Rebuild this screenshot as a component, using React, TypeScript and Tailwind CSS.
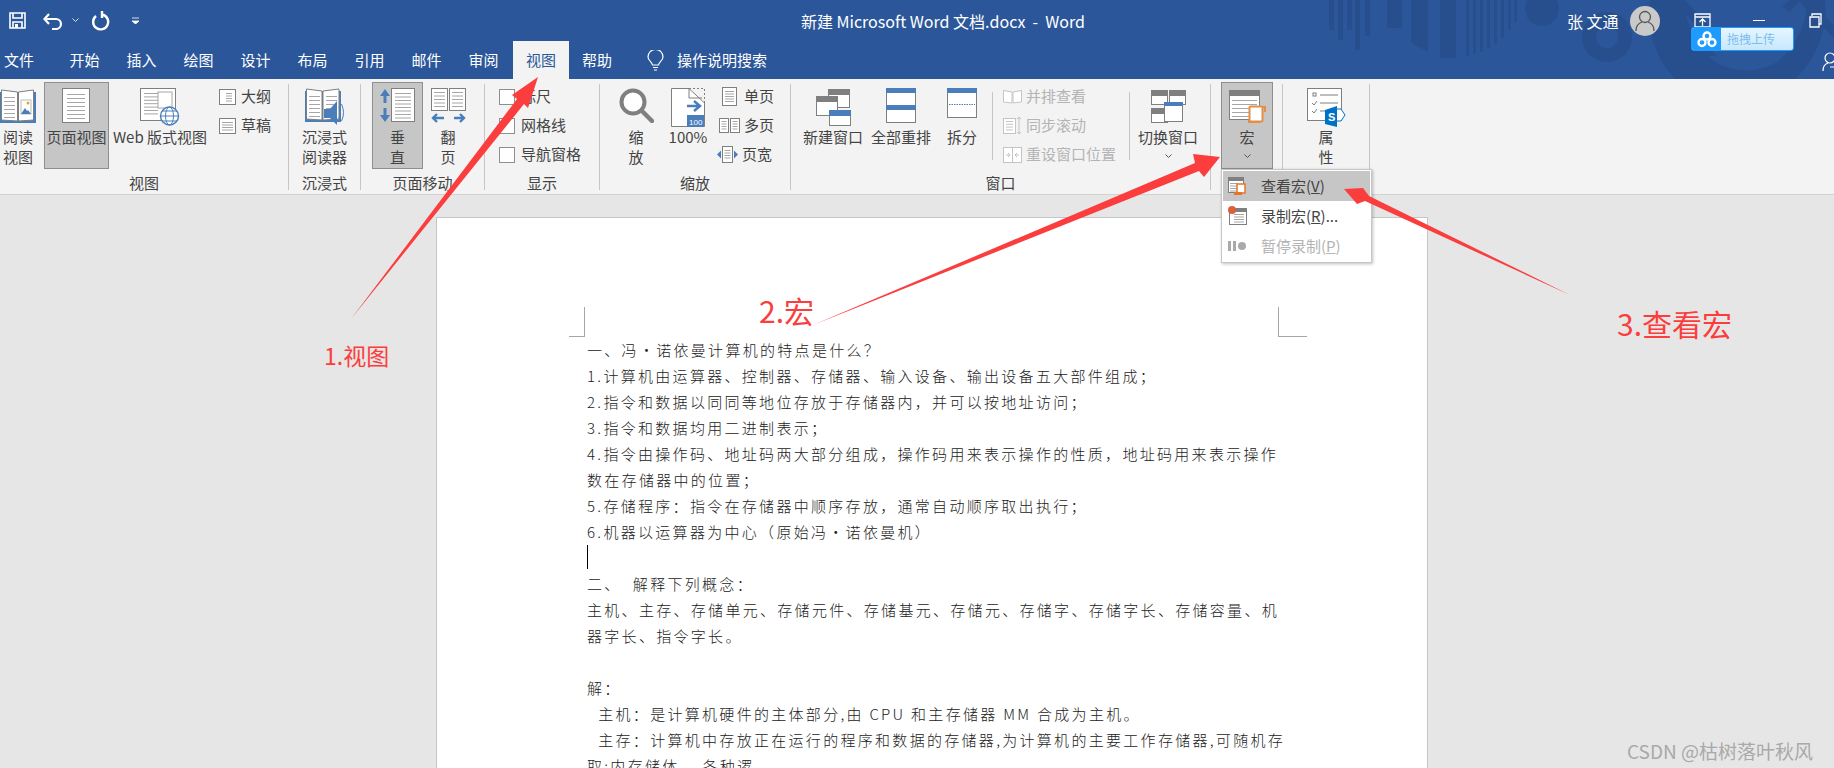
import React from 'react';

const gray = '#7f7f7f';
const blue = '#4a7ebb';
const dim = '#c4c4c4';

const Lines = ({ x, y, w, n, gap, color = '#a6a6a6' }: { x: number; y: number; w: number; n: number; gap: number; color?: string }) => (
  <>
    {Array.from({ length: n }).map((_, i) => (
      <line key={i} x1={x} x2={x + w} y1={y + i * gap + 0.5} y2={y + i * gap + 0.5} stroke={color} />
    ))}
  </>
);

const ReadIcon = () => (
  <svg width="36" height="37" viewBox="0 0 36 37">
    <path d="M0 4v31h36V4z" fill={blue} />
    <path d="M1.5 2 17.5 4v29L1.5 32z" fill="#fff" stroke={gray} />
    <path d="M18.5 4 33.5 2v30l-15 1z" fill="#fff" stroke={gray} />
    <Lines x={4} y={9} w={11} n={6} gap={4} />
    <rect x="21" y="12" width="10" height="14" fill="#fff" stroke="#bbb" />
    <path d="M21 26l4-6 2 3 1-1 3 4z" fill={blue} />
    <circle cx="28" cy="15" r="1.5" fill="#e8a33d" />
  </svg>
);

const PageIcon = () => (
  <svg width="29" height="36" viewBox="0 0 29 36">
    <rect x="0.5" y="0.5" width="27" height="34" fill="#fff" stroke={gray} />
    <Lines x={5} y={6} w={18} n={7} gap={4} />
  </svg>
);

const WebIcon = () => (
  <svg width="40" height="38" viewBox="0 0 40 38">
    <rect x="0.5" y="0.5" width="35" height="32" fill="#fff" stroke={gray} />
    <Lines x={4} y={5} w={14} n={7} gap={3.4} />
    <rect x="18" y="4" width="14" height="16" fill="#fff" stroke="#a6a6a6" />
    <circle cx="29.5" cy="28" r="9" fill="#fff" stroke={blue} strokeWidth="1.4" />
    <ellipse cx="29.5" cy="28" rx="4" ry="9" fill="none" stroke={blue} />
    <path d="M20.5 28h18M22 23h15M22 33h15" stroke={blue} fill="none" />
  </svg>
);

const SmallPage = ({ dots }: { dots?: boolean }) => (
  <svg width="17" height="16" viewBox="0 0 17 16">
    <rect x="0.5" y="0.5" width="16" height="15" fill="#fff" stroke={gray} />
    <Lines x={dots ? 7 : 3} y={4} w={dots ? 6 : 11} n={4} gap={2.5} />
  </svg>
);

const ImmersiveIcon = () => (
  <svg width="40" height="38" viewBox="0 0 40 38">
    <path d="M0 3v31h36V3z" fill={blue} />
    <path d="M1.5 1 17 3v29L1.5 31z" fill="#fff" stroke={gray} />
    <path d="M18 3 34 1v30l-16 1z" fill="#fff" stroke={gray} />
    <Lines x={4} y={8} w={11} n={6} gap={4} />
    <Lines x={21} y={8} w={11} n={4} gap={4} />
    <path d="M19 21h6l7-8v24l-7-7h-6z" fill={blue} />
    <path d="M34 19q3 6 0 11M36.500 16q4 9 0 17" stroke={blue} fill="none" />
  </svg>
);

const VerticalIcon = () => (
  <svg width="36" height="35" viewBox="0 0 36 35">
    <path d="M5 1 10 8H6.500v7h-3V8H0zM5 34 0 27h3.500v-7h3v7H10z" fill={blue} />
    <rect x="11.500" y="0.500" width="23" height="33" fill="#fff" stroke={gray} />
    <Lines x={15} y={5} w={16} n={8} gap={3.500} />
  </svg>
);

const FlipIcon = () => (
  <svg width="35" height="36" viewBox="0 0 35 36">
    <rect x="0.500" y="0.500" width="16" height="22" fill="#fff" stroke={gray} />
    <rect x="18.500" y="0.500" width="16" height="22" fill="#fff" stroke={gray} />
    <Lines x={3} y={4} w={11} n={5} gap={3.500} />
    <Lines x={21} y={4} w={11} n={5} gap={3.500} />
    <path d="M2 30h11M23 30h10M6 26l-4 4 4 4M29 26l4 4-4 4" stroke={blue} strokeWidth="2.400" fill="none" />
  </svg>
);

const Magnifier = () => (
  <svg width="35" height="35" viewBox="0 0 35 35">
    <circle cx="14" cy="14" r="11.500" fill="#fff" stroke={gray} strokeWidth="4" />
    <path d="M22.500 22.500 33 33" stroke={gray} strokeWidth="4.500" strokeLinecap="round" />
  </svg>
);

const ZoomPage = () => (
  <svg width="34" height="40" viewBox="0 0 34 40">
    <path d="M0.500 0.500H18L33.500 15V38.500H0.500z" fill="#fff" stroke={gray} />
    <path d="M18 0.500h15.500V15" fill="none" stroke={gray} strokeDasharray="2 2" />
    <path d="M18 0.500V10h13" fill="none" stroke={gray} />
    <path d="M16 18h12M23 13l6 5-6 5" stroke={blue} strokeWidth="2.500" fill="none" />
    <rect x="16" y="27" width="17" height="12" fill={blue} />
    <text x="18" y="36.500" fontSize="8" fill="#fff" fontFamily="Liberation Sans">100</text>
  </svg>
);

const SinglePage = () => (
  <svg width="15" height="19" viewBox="0 0 15 19">
    <rect x="0.500" y="0.500" width="14" height="18" fill="#fff" stroke={gray} />
    <Lines x={3} y={4} w={9} n={5} gap={2.500} />
  </svg>
);

const MultiPage = () => (
  <svg width="21" height="15" viewBox="0 0 21 15">
    <rect x="0.500" y="0.500" width="9" height="14" fill="#fff" stroke={gray} />
    <rect x="11.500" y="0.500" width="9" height="14" fill="#fff" stroke={gray} />
    <Lines x={2.500} y={3} w={5} n={4} gap={2.500} />
    <Lines x={13.500} y={3} w={5} n={4} gap={2.500} />
  </svg>
);

const PageWidth = () => (
  <svg width="21" height="17" viewBox="0 0 21 17">
    <rect x="5.500" y="0.500" width="10" height="16" fill="#fff" stroke={gray} />
    <Lines x={7.500} y={4} w={6} n={4} gap={2.500} />
    <path d="M4 4.500 0 8.500l4 4zM17 4.500l4 4-4 4z" fill={blue} />
  </svg>
);

const TitledWindow = ({ x, y, w, h, color = gray, bar = 6 }: { x: number; y: number; w: number; h: number; color?: string; bar?: number }) => (
  <>
    <rect x={x + 0.500} y={y + 0.500} width={w} height={h} fill="#fff" stroke={gray} />
    <rect x={x} y={y} width={w + 1} height={bar} fill={color} />
  </>
);

const NewWindow = () => (
  <svg width="35" height="38" viewBox="0 0 35 38">
    <TitledWindow x={12} y={1} w={21} h={18} />
    <TitledWindow x={0} y={8} w={21} h={19} />
    <TitledWindow x={13} y={22} w={21} h={15} color={blue} />
  </svg>
);

const ArrangeAll = () => (
  <svg width="31" height="36" viewBox="0 0 31 36">
    <rect x="0.500" y="0.500" width="29" height="34" fill="#fff" stroke={gray} />
    <rect x="0" y="0" width="30" height="5" fill={blue} />
    <rect x="0" y="17" width="30" height="5" fill={blue} />
  </svg>
);

const SplitIcon = () => (
  <svg width="30" height="31" viewBox="0 0 30 31">
    <rect x="0.500" y="0.500" width="29" height="29" fill="#fff" stroke={gray} />
    <rect x="0" y="0" width="30" height="5" fill={blue} />
    <line x1="2" x2="28" y1="16.500" y2="16.500" stroke={blue} strokeDasharray="1.500 1" />
  </svg>
);

const SideBySide = () => (
  <svg width="19" height="15" viewBox="0 0 19 15">
    <path d="M0.500 1.500 9 3v11L0.500 13zM18.500 1.500 10 3v11l8.500-1z" fill="#fff" stroke={dim} />
  </svg>
);

const SyncScroll = () => (
  <svg width="19" height="19" viewBox="0 0 19 19">
    <rect x="0.500" y="2.500" width="12" height="15" fill="#fff" stroke={dim} />
    <Lines x={3} y={5} w={7} n={4} gap={2.800} color={dim} />
    <path d="M16 1v17M14 3l2-2 2 2M14 16l2 2 2-2" fill="none" stroke={dim} />
  </svg>
);

const ResetPos = () => (
  <svg width="19" height="16" viewBox="0 0 19 16">
    <rect x="0.500" y="0.500" width="18" height="15" fill="#fff" stroke={dim} />
    <path d="M9.500 1v14M3 8h4M5 6l2 2-2 2M16 8h-4M14 6l-2 2 2 2" fill="none" stroke={dim} />
  </svg>
);

const SwitchWindow = () => (
  <svg width="35" height="33" viewBox="0 0 35 33">
    <TitledWindow x={0} y={0} w={16} h={14} />
    <TitledWindow x={18} y={0} w={16} h={14} />
    <TitledWindow x={0} y={18} w={16} h={14} />
    <TitledWindow x={13} y={12} w={18} h={19} color={blue} bar={4} />
  </svg>
);

const MacroIcon = () => (
  <svg width="37" height="34" viewBox="0 0 37 34">
    <rect x="0.500" y="0.500" width="30" height="29" fill="#fff" stroke={gray} />
    <rect x="0" y="0" width="31" height="6" fill={gray} />
    <Lines x={3} y={10} w={25} n={5} gap={4} />
    <path d="M19 33h12V30H19z" fill="#e58e47" />
    <rect x="20.500" y="16.500" width="13" height="15" rx="1" fill="#fff" stroke="#e58e47" strokeWidth="2" />
    <path d="M33 17h3v5" stroke="#e58e47" strokeWidth="2" fill="none" />
  </svg>
);

const PropsIcon = () => (
  <svg width="39" height="39" viewBox="0 0 39 39">
    <rect x="0.500" y="0.500" width="34" height="32" fill="#fff" stroke={gray} />
    <rect x="6" y="5" width="3" height="3" fill="#fff" stroke={gray} />
    <path d="M13 7h18M13 15h18M13 23h7M5 15l2 2 3-4M5 23l2 2 3-4" fill="none" stroke={gray} />
    <path d="M18 22l12-4v21l-12-3z" fill="#0072c6" />
    <path d="M30 21h4l4 6-4 6h-4" fill="#fff" stroke="#0072c6" />
    <text x="21" y="33" fontSize="11" fontWeight="700" fill="#fff" fontFamily="Liberation Sans">S</text>
  </svg>
);

const SmallMacro = () => (
  <svg width="19" height="18" viewBox="0 0 19 18">
    <rect x="0.500" y="0.500" width="15" height="15" fill="#fff" stroke={gray} />
    <rect x="0" y="0" width="16" height="4" fill={gray} />
    <Lines x={2} y={6} w={8} n={4} gap={2.500} />
    <rect x="9" y="7" width="8" height="9" fill="#fff" stroke="#e2762b" strokeWidth="1.500" />
    <rect x="6" y="15" width="8" height="3" fill="#e2762b" />
  </svg>
);

const RecordIcon = () => (
  <svg width="20" height="20" viewBox="0 0 20 20">
    <rect x="1.500" y="2.500" width="17" height="16" fill="#fff" stroke={gray} />
    <rect x="1" y="2" width="18" height="4" fill={gray} />
    <Lines x={6} y={8} w={10} n={4} gap={2.500} />
    <circle cx="4" cy="4" r="4" fill="#d9603b" />
  </svg>
);

const PauseIcon = () => (
  <svg width="19" height="12" viewBox="0 0 19 12">
    <rect x="0" y="1" width="3" height="10" fill="#aaa" />
    <rect x="5" y="1" width="3" height="10" fill="#aaa" />
    <circle cx="14" cy="6" r="4" fill="#aaa" />
  </svg>
);

const Chevron = ({ color = '#555' }: { color?: string }) => (
  <svg width="7" height="5" viewBox="0 0 7 5">
    <path d="M0.500 0.500 3.500 3.500 6.500 0.500" fill="none" stroke={color} />
  </svg>
);

const TitleDecor = () => (
  <svg className="absolute left-0 top-0" width="1834" height="79" viewBox="0 0 1834 79">
    <g fill="#274f8d">
      <rect x="1329" y="0" width="5" height="30" />
      <rect x="1338" y="0" width="5" height="40" />
      <rect x="1347" y="0" width="5" height="30" />
      <rect x="1355" y="0" width="5" height="50" />
      <rect x="1365" y="0" width="5" height="36" />
      <path d="M1387 0h15v28l-15-0zM1411 0h17v52l-17-9z" />
      <rect x="1440" y="0" width="16" height="58" />
      <rect x="1466" y="0" width="3" height="56" />
      <rect x="1473" y="0" width="3" height="54" />
      <rect x="1480" y="0" width="3" height="52" />
      <rect x="1487" y="0" width="3" height="48" />
      <rect x="1494" y="0" width="3" height="44" />
      <rect x="1501" y="0" width="3" height="38" />
      <rect x="1508" y="0" width="3" height="30" />
      <rect x="1514" y="0" width="3" height="22" />
      <circle cx="1542" cy="9" r="17" />
      <circle cx="1607" cy="37" r="18" fill="none" stroke="#274f8d" strokeWidth="14" />
      <path d="M1650 0a95 95 0 0 0 25 79h120a95 95 0 0 0 30-79h-18a78 78 0 0 1-30 62q-30 17-62 0a78 78 0 0 1-30-62z" />
      <path d="M1665 0l52 56h-12l-52-56zM1685 0l40 44h-12l-40-44zM1810 0l24 26v12l-36-38zM1790 0h10l-10 12-8-6z" />
    </g>
  </svg>
);

const Group = ({ w, label, children }: { w: string; label: string; children: React.ReactNode }) => (
  <div className={`${w} h-[106px] shrink-0 border-r border-[#c6c6c6] flex flex-col`}>
    <div className="h-[87px] -mt-[2px] flex">{children}</div>
    <div className="h-[20px] mt-[4px] leading-[20px] text-center text-[15px] text-[#444]">{label}</div>
  </div>
);

const Big = ({ w, ml = '', sel, icon, lines }: { w: string; ml?: string; sel?: boolean; icon: React.ReactNode; lines: string[] }) => (
  <div className={`${w} ${ml} h-[87px] shrink-0 flex flex-col items-center border ${sel ? 'bg-[#c6c6c6] border-[#8f8f8f]' : 'border-transparent'}`}>
    <div className="h-[44px] pt-[5px] flex items-start justify-center">{icon}</div>
    {lines.map((l, i) => (
      <div key={i} className="h-[20px] leading-[20px] whitespace-nowrap text-[15px] text-[#444]">{l}</div>
    ))}
  </div>
);

const BigChevron = ({ w, sel, ml = '', icon, label }: { w: string; sel?: boolean; ml?: string; icon: React.ReactNode; label: string }) => (
  <div className={`${w} ${ml} h-[87px] shrink-0 flex flex-col items-center border ${sel ? 'bg-[#c6c6c6] border-[#8f8f8f]' : 'border-transparent'}`}>
    <div className="h-[44px] pt-[7px] flex items-start justify-center">{icon}</div>
    <div className="h-[20px] leading-[20px] whitespace-nowrap text-[15px] text-[#444]">{label}</div>
    <div className="mt-[7px] flex"><Chevron /></div>
  </div>
);

const SmallRow = ({ icon, label, dis, iconW = 'w-[20px]' }: { icon: React.ReactNode; label: string; dis?: boolean; iconW?: string }) => (
  <div className="h-[29px] flex items-center">
    <div className={`${iconW} flex justify-center`}>{icon}</div>
    <span className={`ml-[4px] text-[15px] whitespace-nowrap ${dis ? 'text-[#b4b4b4]' : 'text-[#444]'}`}>{label}</span>
  </div>
);

const Check = ({ label }: { label: string }) => (
  <div className="h-[29px] flex items-center">
    <div className="w-[16px] h-[16px] bg-white border border-[#8f8f8f]" />
    <span className="ml-[6px] text-[15px] whitespace-nowrap text-[#444]">{label}</span>
  </div>
);

const MenuItem = ({ icon, label, active, dis }: { icon: React.ReactNode; label: React.ReactNode; active?: boolean; dis?: boolean }) => (
  <div className={`h-[30px] flex items-center ${active ? 'bg-[#c6c6c6]' : ''}`}>
    <div className="w-[38px] pl-[5px] flex">{icon}</div>
    <span className={`text-[15px] whitespace-nowrap ${dis ? 'text-[#b4b4b4]' : 'text-[#444]'}`}>{label}</span>
  </div>
);

const docLines = [
  '一、冯•诺依曼计算机的特点是什么？',
  '1.计算机由运算器、控制器、存储器、输入设备、输出设备五大部件组成；',
  '2.指令和数据以同同等地位存放于存储器内，并可以按地址访问；',
  '3.指令和数据均用二进制表示；',
  '4.指令由操作码、地址码两大部分组成，操作码用来表示操作的性质，地址码用来表示操作',
  '数在存储器中的位置；',
  '5.存储程序：指令在存储器中顺序存放，通常自动顺序取出执行；',
  '6.机器以运算器为中心（原始冯•诺依曼机）',
  '',
  '二、  解释下列概念：',
  '主机、主存、存储单元、存储元件、存储基元、存储元、存储字、存储字长、存储容量、机',
  '器字长、指令字长。',
  '',
  '解：',
  '  主机：是计算机硬件的主体部分,由 CPU 和主存储器 MM 合成为主机。',
  '  主存：计算机中存放正在运行的程序和数据的存储器,为计算机的主要工作存储器,可随机存',
  '取;内存储体、 各种逻',
];

export default function App() {
  return (
    <div className="relative w-[1834px] h-[768px] overflow-hidden bg-[#e6e6e6] font-['Noto_Sans_CJK_SC','Noto_Sans',sans-serif]">
      {/* title bar */}
      <div className="relative h-[79px] bg-[#2b579a] text-white">
        <TitleDecor />
        <div className="relative h-[41px] flex items-center text-[16px]">
          <svg className="ml-[9px]" width="17" height="17" viewBox="0 0 17 17">
            <path d="M1 1h15v15H1zM4 1v5h9V1M4 16v-6h9v6" fill="none" stroke="#fff" strokeWidth="1.600" />
            <rect x="6" y="12" width="3" height="4" fill="#fff" />
          </svg>
          <svg className="ml-[17px]" width="20" height="18" viewBox="0 0 20 18">
            <path d="M2 7h11a5 5 0 0 1 0 10H9M6 2 1.500 7 6 12" fill="none" stroke="#fff" strokeWidth="2.200" />
          </svg>
          <div className="ml-[9px] flex"><Chevron color="#dbe4f2" /></div>
          <svg className="ml-[12px]" width="19" height="20" viewBox="0 0 19 20">
            <path d="M11 3.500a7.500 7.500 0 1 1-6 1.500M11 0v7" fill="none" stroke="#fff" strokeWidth="2.400" />
          </svg>
          <svg className="ml-[22px]" width="7" height="7" viewBox="0 0 7 7">
            <path d="M0 1h7M0 4h7L3.500 7z" stroke="#fff" fill="#fff" strokeWidth="0.800" />
          </svg>
          <span className="ml-[660px] w-[288px] whitespace-pre text-center">新建 Microsoft Word 文档.docx  -  Word</span>
          <span className="ml-[480px] w-[54px] whitespace-nowrap">张 文通</span>
          <div className="ml-[9px] w-[30px] h-[30px] rounded-full bg-[#c9c9c9] flex items-center justify-center">
            <svg width="20" height="22" viewBox="0 0 20 22">
              <circle cx="10" cy="7" r="5.500" fill="none" stroke="#555" strokeWidth="1.300" />
              <path d="M1 21c0-5 3-8 6-9M19 21c0-5-3-8-6-9" fill="none" stroke="#555" strokeWidth="1.300" />
            </svg>
          </div>
          <svg className="ml-[34px]" width="17" height="15" viewBox="0 0 17 15">
            <path d="M1 1h15v13H1zM1 4h15M8.500 13V6M5.500 9l3-3 3 3" fill="none" stroke="#fff" strokeWidth="1.300" />
          </svg>
          <div className="ml-[42px] w-[12px] h-[1.500px] bg-white" />
          <svg className="ml-[44px]" width="13" height="15" viewBox="0 0 13 15">
            <path d="M3 3V1h9v10h-2M1 4h9v10H1z" fill="none" stroke="#fff" strokeWidth="1.300" />
          </svg>
        </div>
        <div className="relative h-[38px] flex items-center text-[15px]">
          <div className="w-[38px] text-center">文件</div>
          <div className="ml-[18px] flex">
            {['开始', '插入', '绘图', '设计', '布局', '引用', '邮件', '审阅'].map((t) => (
              <div key={t} className="w-[57px] text-center">{t}</div>
            ))}
          </div>
          <div className="ml-[1px] w-[56px] h-[38px] leading-[38px] text-center bg-[#f3f3f3] text-[#2b579a]">视图</div>
          <div className="w-[56px] text-center">帮助</div>
          <svg className="ml-[22px]" width="17" height="21" viewBox="0 0 17 21">
            <path d="M5.500 15c0-3-4.500-4-4.500-8a7.500 7.500 0 0 1 15 0c0 4-4.500 5-4.500 8zM6 17.500h5M7 20h3" fill="none" stroke="#fff" strokeWidth="1.200" />
          </svg>
          <span className="ml-[13px] whitespace-nowrap">操作说明搜索</span>
        </div>
        {/* floating upload widget */}
        <div className="absolute left-[1691px] top-[27px] w-[103px] h-[24px] rounded-[3px] border border-[#1e9bff] flex overflow-hidden bg-gradient-to-b from-[#e6f6ff] to-[#c6e8fc]">
          <div className="w-[29px] bg-[#1e9bff] flex items-center justify-center">
            <svg width="20" height="17" viewBox="0 0 20 17">
              <circle cx="10" cy="5" r="3.500" fill="none" stroke="#fff" strokeWidth="2.400" />
              <circle cx="5" cy="11.500" r="3.500" fill="none" stroke="#fff" strokeWidth="2.400" />
              <circle cx="15" cy="11.500" r="3.500" fill="none" stroke="#fff" strokeWidth="2.400" />
            </svg>
          </div>
          <span className="ml-[6px] text-[12px] leading-[22px] text-[#7cbdf0]">拖拽上传</span>
        </div>
        <svg className="absolute left-[1822px] top-[52px]" width="12" height="20" viewBox="0 0 12 20">
          <circle cx="8" cy="6" r="5" fill="none" stroke="#fff" strokeWidth="1.200" />
          <path d="M1 19c0-4 2-7 5-8M8 15h4" fill="none" stroke="#fff" strokeWidth="1.200" />
        </svg>
      </div>

      {/* ribbon */}
      <div className="h-[116px] pt-[5px] bg-[#f3f3f3] border-b border-[#d2d2d2] flex">
        <Group w="w-[289px]" label="视图">
          <Big w="w-[38px]" ml="ml-[-1px]" icon={<ReadIcon />} lines={['阅读', '视图']} />
          <Big w="w-[65px]" ml="ml-[7px]" sel icon={<PageIcon />} lines={['页面视图']} />
          <Big w="w-[98px]" ml="ml-[2px]" icon={<WebIcon />} lines={['Web 版式视图']} />
          <div className="ml-[8px]">
            <SmallRow icon={<SmallPage dots />} label="大纲" />
            <SmallRow icon={<SmallPage />} label="草稿" />
          </div>
        </Group>
        <Group w="w-[72px]" label="沉浸式">
          <Big w="w-[71px]" icon={<ImmersiveIcon />} lines={['沉浸式', '阅读器']} />
        </Group>
        <Group w="w-[124px]" label="页面移动">
          <Big w="w-[51px]" ml="ml-[11px]" sel icon={<VerticalIcon />} lines={['垂', '直']} />
          <Big w="w-[50px]" ml="ml-[0px]" icon={<FlipIcon />} lines={['翻', '页']} />
        </Group>
        <Group w="w-[115px]" label="显示">
          <div className="ml-[14px]">
            <Check label="标尺" />
            <Check label="网格线" />
            <Check label="导航窗格" />
          </div>
        </Group>
        <Group w="w-[191px]" label="缩放">
          <Big w="w-[50px]" ml="ml-[11px]" icon={<Magnifier />} lines={['缩', '放']} />
          <Big w="w-[54px]" ml="ml-[0px]" icon={<ZoomPage />} lines={['100%']} />
          <div className="ml-[4px]">
            <SmallRow icon={<SinglePage />} label="单页" iconW="w-[21px]" />
            <SmallRow icon={<MultiPage />} label="多页" iconW="w-[21px]" />
            <div className="-ml-[2px]">
              <SmallRow icon={<PageWidth />} label="页宽" iconW="w-[21px]" />
            </div>
          </div>
        </Group>
        <Group w="w-[420px]" label="窗口">
          <Big w="w-[64px]" ml="ml-[10px]" icon={<NewWindow />} lines={['新建窗口']} />
          <Big w="w-[68px]" ml="ml-[2px]" icon={<ArrangeAll />} lines={['全部重排']} />
          <Big w="w-[54px]" icon={<SplitIcon />} lines={['拆分']} />
          <div className="ml-[3px] mt-[10px] mr-[9px] h-[68px] w-px bg-[#c6c6c6]" />
          <div className="w-[127px]">
            <SmallRow icon={<SideBySide />} label="并排查看" dis />
            <SmallRow icon={<SyncScroll />} label="同步滚动" dis />
            <SmallRow icon={<ResetPos />} label="重设窗口位置" dis />
          </div>
          <div className="mt-[10px] h-[68px] w-px bg-[#c6c6c6]" />
          <BigChevron w="w-[74px]" ml="ml-[1px]" icon={<SwitchWindow />} label="切换窗口" />
        </Group>
        <Group w="w-[72px]" label="">
          <BigChevron w="w-[52px]" ml="ml-[10px]" sel icon={<MacroIcon />} label="宏" />
        </Group>
        <Group w="w-[87px]" label="">
          <Big w="w-[86px]" icon={<PropsIcon />} lines={['属', '性']} />
        </Group>
      </div>

      {/* document page */}
      <div className="mt-[22px] ml-[436px] w-[992px] h-[560px] bg-white border border-[#c6c6c6] pt-[119px] pl-[150px] text-[15px] leading-[26px] tracking-[2.300px] text-[#222] font-light">
        {docLines.map((l, i) => (
          <div key={i} className="h-[26px] whitespace-pre">
            {i === 8 ? <div className="w-px h-[24px] bg-black" /> : l}
          </div>
        ))}
      </div>

      {/* crop marks on the page */}
      <div className="absolute left-[569px] top-[307px] w-[16px] h-[30px] border-r border-b border-[#a6a6a6]" />
      <div className="absolute left-[1278px] top-[307px] w-[29px] h-[30px] border-l border-b border-[#a6a6a6]" />

      {/* macro dropdown */}
      <div className="absolute left-[1221px] top-[169px] w-[151px] h-[94px] bg-white border border-[#c6c6c6] shadow-[1px_1px_3px_rgba(0,0,0,0.25)] p-[1px]">
        <MenuItem active icon={<SmallMacro />} label={<>查看宏(<u>V</u>)</>} />
        <MenuItem icon={<RecordIcon />} label={<>录制宏(<u>R</u>)...</>} />
        <MenuItem dis icon={<PauseIcon />} label={<>暂停录制(<u>P</u>)</>} />
      </div>

      {/* annotations */}
      <svg className="absolute left-0 top-0 pointer-events-none" width="1834" height="768" viewBox="0 0 1834 768">
        <g fill="#fb3d3d">
          <path d="M351 319 517 99 512 95 538 77 528 108 524 104z" />
          <path d="M813 325 1195 163 1193 154 1220 157 1204 177 1199 171z" />
          <path d="M1570 295 1369 196 1363 188 1344 189 1357 204 1365 201z" />
        </g>
      </svg>
      <div className="absolute left-[324px] top-[339px] text-[23px] leading-[32px] text-[#fb3d3d]">1.视图</div>
      <div className="absolute left-[759px] top-[290px] text-[30px] leading-[40px] text-[#fb3d3d]">2.宏</div>
      <div className="absolute left-[1617px] top-[303px] text-[30px] leading-[40px] text-[#fb3d3d]">3.查看宏</div>
      <div className="absolute left-[1627px] top-[739px] text-[19px] leading-[24px] text-[#a9a9a9]">CSDN @枯树落叶秋风</div>
    </div>
  );
}
